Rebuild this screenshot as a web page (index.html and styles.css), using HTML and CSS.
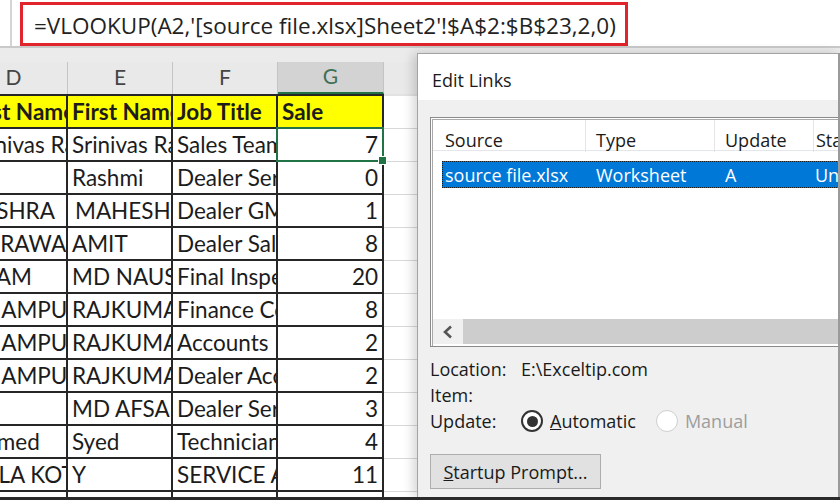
FILE: index.html
```html
<!DOCTYPE html>
<html lang="en">
<head>
<meta charset="utf-8">
<title>Edit Links</title>
<link rel="stylesheet" href="styles.css">
</head>
<body>
<div class="screen">
  <div class="formula-bar">
    <div class="fx-edge"></div>
    <div class="formula">=VLOOKUP(A2,'[source file.xlsx]Sheet2'!$A$2:$B$23,2,0)</div>
  </div>
  <div class="band"></div>
  <div class="sheet">
    <div class="col-heads">
      <div class="ch">D</div>
      <div class="ch">E</div>
      <div class="ch">F</div>
      <div class="ch active">G</div>
      <div class="ch last"></div>
    </div>
    <div class="grid">
      <div class="c hd d">Last Name</div><div class="c hd">First Name</div><div class="c hd">Job Title</div><div class="c hd">Sale</div><div class="c h hdh"></div>
      <div class="c d">Srinivas Rao</div><div class="c">Srinivas Rao</div><div class="c">Sales Team Leader</div><div class="c num sel">7<span class="handle"></span></div><div class="c h"></div>
      <div class="c d"></div><div class="c">Rashmi</div><div class="c">Dealer Service Advisor</div><div class="c num">0</div><div class="c h"></div>
      <div class="c d">MISHRA</div><div class="c mid">MAHESH</div><div class="c">Dealer GM</div><div class="c num">1</div><div class="c h"></div>
      <div class="c d">AGRAWAL</div><div class="c">AMIT</div><div class="c">Dealer Sales Executive</div><div class="c num">8</div><div class="c h"></div>
      <div class="c d">ALAM</div><div class="c">MD NAUSHAD</div><div class="c">Final Inspector</div><div class="c num">20</div><div class="c h"></div>
      <div class="c d">CHAMPUR</div><div class="c">RAJKUMAR</div><div class="c">Finance Coordinator</div><div class="c num">8</div><div class="c h"></div>
      <div class="c d">CHAMPUR</div><div class="c">RAJKUMAR</div><div class="c">Accounts Executive</div><div class="c num">2</div><div class="c h"></div>
      <div class="c d">CHAMPUR</div><div class="c">RAJKUMAR</div><div class="c">Dealer Accountant</div><div class="c num">2</div><div class="c h"></div>
      <div class="c d"></div><div class="c">MD AFSAR</div><div class="c">Dealer Service Advisor</div><div class="c num">3</div><div class="c h"></div>
      <div class="c d">Ahmed</div><div class="c">Syed</div><div class="c">Technician</div><div class="c num">4</div><div class="c h"></div>
      <div class="c d">BALA KOTY</div><div class="c">Y</div><div class="c">SERVICE ADVISOR</div><div class="c num">11</div><div class="c h"></div>
      <div class="c d"></div><div class="c"></div><div class="c"></div><div class="c num"></div><div class="c h"></div>
    </div>
  </div>

  <div class="dialog">
    <div class="dlg-title">Edit Links</div>
    <div class="dlg-body">
      <div class="listbox">
        <div class="lb-head">
          <div class="hc first">Source</div>
          <div class="hc">Type</div>
          <div class="hc">Update</div>
          <div class="hc tight">Status</div>
        </div>
        <div class="lb-row selected">
          <div class="rc first">source file.xlsx</div>
          <div class="rc">Worksheet</div>
          <div class="rc">A</div>
          <div class="rc tight">Unknown</div>
        </div>
        <div class="lb-fill"></div>
        <div class="hscroll">
          <div class="hs-btn">
            <svg width="12" height="14" viewBox="0 0 12 14"><polyline points="9,1.5 3,7 9,12.5" fill="none" stroke="#555" stroke-width="2.6"/></svg>
          </div>
          <div class="hs-track"></div>
        </div>
      </div>
      <div class="info-row top"><span class="lbl">Location:</span><span>E:\Exceltip.com</span></div>
      <div class="info-row"><span class="lbl">Item:</span></div>
      <div class="info-row">
        <span class="lbl">Update:</span>
        <span class="radio on"></span><span class="opt"><u>A</u>utomatic</span>
        <span class="radio off"></span><span class="opt dim">Manual</span>
      </div>
      <button class="btn" type="button"><u>S</u>tartup Prompt...</button>
    </div>
  </div>
</div>
</body>
</html>
```
FILE: styles.css
```css
html, body {
  margin: 0;
  padding: 0;
  background: #ffffff;
}

.screen {
  position: relative;
  width: 840px;
  height: 500px;
  box-sizing: border-box;
  overflow: hidden;
  background: #ffffff;
  border-bottom: 3px solid #2a2a2a;
  font-family: Lato, "Liberation Sans", sans-serif;
}

/* formula bar */
.formula-bar {
  display: flex;
  height: 46px;
  background: #ffffff;
  border-bottom: 2px solid #c9c9c9;
}

.fx-edge {
  width: 10px;
  border-right: 2px solid #d4d4d4;
}

.formula {
  box-sizing: border-box;
  width: 608px;
  height: 44px;
  margin: 2px 0 0 8px;
  padding: 2px 0 0 11px;
  border: 3px solid #e1232b;
  display: flex;
  align-items: center;
  font-family: "Open Sans", sans-serif;
  font-size: 22.5px;
  color: #222222;
  white-space: nowrap;
  overflow: hidden;
}

.band {
  height: 14px;
  background: #ebebeb;
}

/* worksheet */
.sheet {
  margin-left: -40px;
}

.col-heads,
.grid {
  display: grid;
  grid-template-columns: 108px 105px 105px 106px 1fr;
}

.col-heads {
  height: 32px;
  background: #e9e9e9;
}

.ch {
  box-sizing: border-box;
  display: flex;
  align-items: center;
  justify-content: center;
  padding: 0 0 4px 0;
  border-right: 1px solid #c4c4c4;
  font-size: 21px;
  color: #454545;
}

.ch.active {
  background: #d3d3d3;
  color: #3f6f55;
  border-bottom: 2px solid #217346;
}

.ch.last {
  border-right: none;
}

.grid {
  grid-template-rows: 35px repeat(12, 33px) 20px;
}

.c {
  box-sizing: border-box;
  display: flex;
  align-items: flex-end;
  padding: 0 4px 3px 4px;
  border-right: 2px solid #262626;
  border-bottom: 2px solid #262626;
  background: #ffffff;
  overflow: hidden;
  white-space: pre;
  font-size: 22.5px;
  line-height: 25px;
  color: #1c1c1c;
}

.c.d {
  padding-left: 9px;
}

.c.mid {
  padding-left: 7px;
}

.c.hd {
  border-top: 2px solid #262626;
  background: #ffff00;
  font-weight: 700;
}

.c.num {
  justify-content: flex-end;
}

.c.h {
  border-right: none;
  border-bottom: 1px solid #d9d9d9;
}

.c.hdh {
  border-top: 2px solid #e2e2e2;
}

.c.sel {
  position: relative;
  overflow: visible;
}

.c.sel::after {
  content: "";
  position: absolute;
  top: -2px;
  left: -2px;
  right: -2px;
  bottom: -2px;
  border: 2px solid #217346;
}

.handle {
  position: absolute;
  right: -5px;
  bottom: -5px;
  width: 7px;
  height: 7px;
  background: #217346;
  border: 1px solid #ffffff;
  z-index: 1;
}

/* Edit Links dialog */
.dialog {
  position: absolute;
  left: 417px;
  top: 53px;
  right: 0;
  bottom: 0;
  display: flex;
  flex-direction: column;
  overflow: hidden;
  background: #f0f0f0;
  border-left: 1px solid #a3a3a3;
  border-top: 1px solid #a3a3a3;
  border-right: 2px solid #9a9a9a;
  box-shadow: -4px 0 10px rgba(0, 0, 0, 0.16);
  font-family: "Open Sans", sans-serif;
  font-size: 18px;
  color: #1a1a1a;
}

.dlg-title {
  height: 46px;
  padding: 6px 0 0 14px;
  box-sizing: border-box;
  display: flex;
  align-items: center;
  background: #ffffff;
}

.dlg-body {
  flex: 1;
  display: flex;
  flex-direction: column;
  align-items: flex-start;
  padding: 17px 0 0 12px;
}

.listbox {
  align-self: stretch;
  box-sizing: border-box;
  height: 230px;
  margin-right: -40px;
  padding: 2px 0 2px 2px;
  display: flex;
  flex-direction: column;
  background: #ffffff;
  border: 1px solid #8a8a8a;
  box-shadow: inset 1px 1px 0 #ffffff, inset 2px 2px 0 #a9a9a9;
}

.lb-head,
.lb-row {
  display: grid;
  grid-template-columns: 152px 129px 99px 1fr;
  white-space: nowrap;
}

.lb-head {
  height: 30px;
  border-bottom: 1px solid #e3e6ea;
}

.hc {
  padding: 8px 0 0 10px;
  border-left: 1px solid #e5e5e5;
  line-height: 24px;
}

.hc.first {
  padding-left: 12px;
  border-left: none;
}

.hc.tight,
.rc.tight {
  padding-left: 2px;
}

.lb-row.selected {
  height: 27px;
  margin: 10px 0 0 9px;
  grid-template-columns: 143px 129px 99px 1fr;
  align-items: center;
  background: #0078d7;
  color: #ffffff;
  outline: 1px dotted #1d1d1d;
  outline-offset: -1px;
  line-height: 24px;
}

.rc {
  padding-left: 11px;
  overflow: hidden;
}

.rc.first {
  padding-left: 3px;
}

.lb-fill {
  flex: 1;
}

.hscroll {
  display: flex;
  height: 25px;
}

.hs-btn {
  width: 30px;
  display: flex;
  align-items: center;
  justify-content: center;
  background: #f0f0f0;
}

.hs-track {
  flex: 1;
  background: #cdcdcd;
}

.info-row {
  display: flex;
  align-items: center;
  height: 26px;
  line-height: 24px;
  white-space: nowrap;
}

.info-row.top {
  margin-top: 9px;
}

.lbl {
  width: 91px;
}

.radio {
  box-sizing: border-box;
  width: 22px;
  height: 22px;
  border-radius: 50%;
  display: flex;
  align-items: center;
  justify-content: center;
  background: #ffffff;
}

.radio.on {
  border: 2px solid #333333;
}

.radio.on::after {
  content: "";
  width: 11px;
  height: 11px;
  border-radius: 50%;
  background: #333333;
}

.radio.off {
  margin-left: 20px;
  border: 1px solid #cfcfcf;
}

.opt {
  margin-left: 7px;
}

.opt.dim {
  color: #9d9d9d;
}

.btn {
  margin-top: 20px;
  width: 171px;
  height: 35px;
  padding: 0;
  background: #e1e1e1;
  border: 1px solid #adadad;
  font-family: "Open Sans", sans-serif;
  font-size: 18px;
  color: #1a1a1a;
}
```
